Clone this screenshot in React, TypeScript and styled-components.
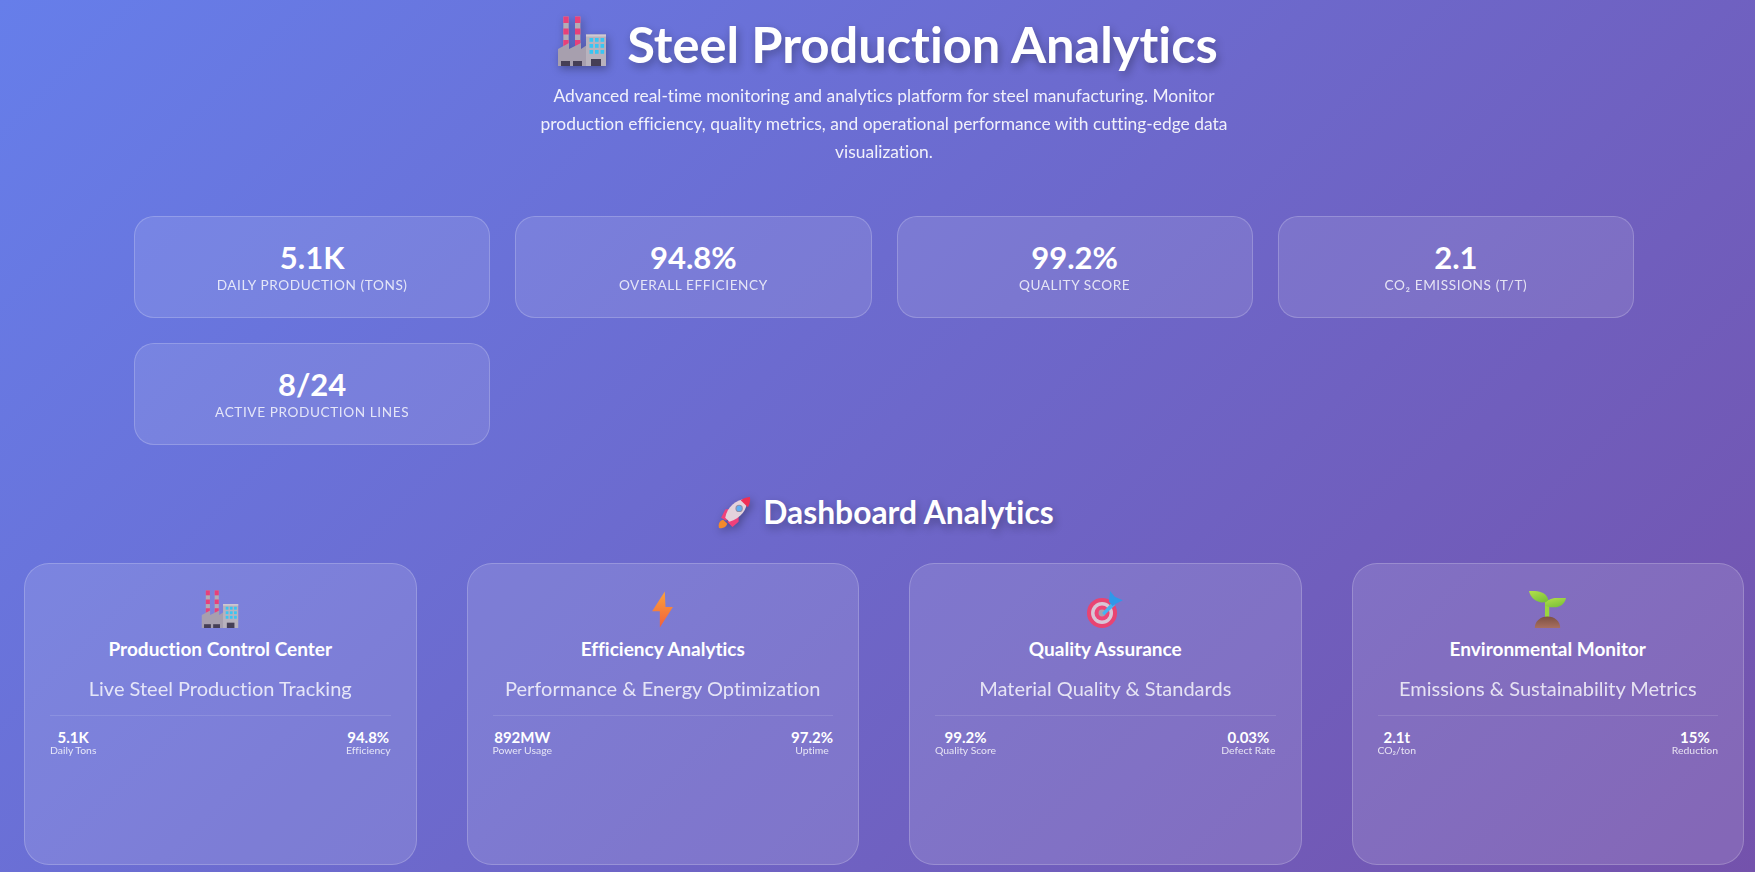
import React from 'react';
import styled, { createGlobalStyle } from 'styled-components';

const GlobalStyle = createGlobalStyle`
  * { box-sizing: border-box; }
  html, body {
    margin: 0;
    padding: 0;
    height: 872px;
    overflow: hidden;
  }
  body {
    font-family: 'Lato', 'Liberation Sans', sans-serif;
    font-variant-ligatures: none;
    color: #fff;
  }
`;

const Page = styled.div`
  width: 1755px;
  height: 872px;
  overflow: hidden;
  background: linear-gradient(135deg, #667eea 0%, #764ba2 116%);
  padding: 0 11px 0 24px;
`;

const Hero = styled.header`
  display: flex;
  flex-direction: column;
  align-items: center;
  padding-top: 11px;
`;

const HeroTitle = styled.h1`
  display: flex;
  align-items: center;
  gap: 20px;
  margin: 0;
  padding-left: 7px;
  height: 66px;
  font-size: 50.6px;
  font-weight: 700;
  line-height: 66px;
  text-shadow: 2px 4px 8px rgba(0, 0, 0, 0.3);

  & > svg {
    margin-bottom: 6px;
  }
`;

const HeroText = styled.p`
  width: 700px;
  margin: 5px 0 0;
  font-size: 17.4px;
  font-weight: 400;
  line-height: 28px;
  text-align: center;
  opacity: 0.9;
`;

const StatsGrid = styled.section`
  display: grid;
  grid-template-columns: repeat(4, 356.25px);
  gap: 25px;
  width: 1500px;
  margin: 50px 0 0 110px;
`;

const StatCard = styled.div`
  height: 102px;
  display: flex;
  flex-direction: column;
  align-items: center;
  padding-top: 24px;
  border: 1px solid rgba(255, 255, 255, 0.2);
  border-radius: 20px;
  background: rgba(255, 255, 255, 0.1);
`;

const StatValue = styled.div`
  font-size: 31px;
  font-weight: 700;
  line-height: 32px;
`;

const StatLabel = styled.div`
  margin-top: 4px;
  font-size: 13.6px;
  line-height: 17px;
  letter-spacing: 0.6px;
  text-transform: uppercase;
  opacity: 0.8;
`;

const SectionTitle = styled.h2`
  display: flex;
  align-items: center;
  justify-content: center;
  gap: 12px;
  height: 40px;
  margin: 47px 0 0;
  padding-left: 4px;
  font-size: 31.8px;
  font-weight: 700;
  line-height: 40px;
  text-shadow: 2px 4px 8px rgba(0, 0, 0, 0.3);
`;

const CardGrid = styled.section`
  display: grid;
  grid-template-columns: repeat(4, 392.5px);
  gap: 50px;
  margin-top: 31px;
`;

const DashCard = styled.article`
  height: 302px;
  padding: 27px 25px 25px;
  border: 1px solid rgba(255, 255, 255, 0.2);
  border-radius: 25px;
  background: rgba(255, 255, 255, 0.12);
`;

const CardIcon = styled.div`
  display: flex;
  justify-content: center;
  align-items: flex-end;
  height: 37px;
`;

const CardTitle = styled.h3`
  margin: 9px 0 0;
  font-size: 19px;
  font-weight: 700;
  line-height: 24px;
  text-align: center;
`;

const CardSubtitle = styled.p`
  margin: 15px 0 0;
  font-size: 20px;
  font-weight: 400;
  line-height: 24px;
  text-align: center;
  opacity: 0.8;
`;

const Metrics = styled.div`
  display: flex;
  justify-content: space-between;
  margin-top: 15px;
  padding-top: 13px;
  border-top: 1px solid rgba(255, 255, 255, 0.12);
`;

const Metric = styled.div`
  display: flex;
  flex-direction: column;
  align-items: center;
`;

const MetricValue = styled.div`
  font-size: 15px;
  font-weight: 700;
  line-height: 16px;
`;

const MetricLabel = styled.div`
  font-size: 10.4px;
  line-height: 10px;
  opacity: 0.8;
`;

const Drawn = styled.svg<{ $shadow?: boolean }>`
  display: block;
  flex: none;
  filter: ${(p) => (p.$shadow ? 'drop-shadow(2px 3px 4px rgba(0, 0, 0, 0.3))' : 'none')};
`;

type IconProps = { size: number; shadow?: boolean };

const FactoryIcon = ({ size, shadow }: IconProps) => (
  <Drawn $shadow={shadow} width={size} height={size} viewBox="0 0 48 50">
    {[5.3, 17].map((x) => (
      <g key={x}>
        <rect x={x} y="0.5" width="5.4" height="34" fill="#b3acb5" />
        <rect x={x} y="0.5" width="5.4" height="6.5" fill="#e8407a" />
        <rect x={x} y="12.5" width="5.4" height="6" fill="#e8407a" />
        <rect x={x} y="24" width="5.4" height="6" fill="#e8407a" />
      </g>
    ))}
    <path d="M0 50V33l11-6v6l12-6v6l6-4v21z" fill="#a79fae" />
    <rect x="28" y="18.5" width="20" height="31.5" fill="#b8b2bd" />
    <rect x="28" y="18.5" width="20" height="2" fill="#cfcad2" />
    {[32, 37.5, 43].map((x) =>
      [22, 28, 34].map((y) => (
        <rect key={`${x}-${y}`} x={x - 0.5} y={y} width="3.6" height="3.8" fill="#38c6f4" />
      )),
    )}
    <rect x="3" y="45" width="9" height="5" fill="#463f56" />
    <rect x="15" y="45" width="9" height="5" fill="#463f56" />
    <rect x="33" y="43" width="10" height="7" fill="#463f56" />
  </Drawn>
);

const RocketIcon = ({ size, shadow }: IconProps) => (
  <Drawn $shadow={shadow} width={size} height={size} viewBox="0 0 32 32">
    <path d="M1 31c-1-3 0-7 4-8l4 4c-1 3-4 5-8 4z" fill="#f58a2a" />
    <path d="M7 13l7-1-6 12-5-3z" fill="#f0407a" />
    <path d="M20 25l0-7-11 7 5 5z" fill="#f0407a" />
    <path d="M7 21C9 11 17 3 28 3c1 10-6 19-17 22z" fill="#e4d3dc" />
    <path d="M22 4c3-2 7-3 9-3 .5 3-.2 7-2 10z" fill="#ef2f55" />
    <circle cx="20.500" cy="12" r="3.600" fill="#8f8fa8" />
    <circle cx="20.500" cy="12" r="2.500" fill="#5fb0f5" />
  </Drawn>
);

const BoltIcon = ({ size }: IconProps) => (
  <Drawn width={size} height={size} viewBox="0 0 32 32">
    <defs>
      <linearGradient id="bolt" x1="0.5" y1="0" x2="0.5" y2="1">
        <stop offset="0" stopColor="#fba23a" />
        <stop offset="1" stopColor="#f2603c" />
      </linearGradient>
    </defs>
    <path d="M18 .5L7 17.600h6.700L13.700 31.500 25 13.800h-6.400z" fill="url(#bolt)" />
  </Drawn>
);

const TargetIcon = ({ size }: IconProps) => (
  <Drawn width={size} height={size} viewBox="0 0 32 32">
    <circle cx="13" cy="19" r="13" fill="#e84472" />
    <circle cx="13" cy="19" r="9.500" fill="#d9c6d6" />
    <circle cx="13" cy="19" r="6.500" fill="#ee4678" />
    <circle cx="13" cy="19" r="3" fill="#a7a0ae" />
    <path d="M13 19l9-9.500 2.500 2.500-9.500 9z" fill="#45b4f2" />
    <path d="M19 9L20 0l4 5 7 3-6 3-3 2z" fill="#2f98ea" />
  </Drawn>
);

const SeedlingIcon = ({ size }: IconProps) => (
  <Drawn width={size} height={size} viewBox="0 0 32 32">
    <defs>
      <linearGradient id="leaf" x1="0" y1="0" x2="0.6" y2="1">
        <stop offset="0" stopColor="#b4e04a" />
        <stop offset="1" stopColor="#7cc23a" />
      </linearGradient>
      <linearGradient id="soil" x1="0.5" y1="0" x2="0.5" y2="1">
        <stop offset="0" stopColor="#7d5042" />
        <stop offset="1" stopColor="#a86f60" />
      </linearGradient>
    </defs>
    <path d="M13.800 8h3.700v16h-3.700z" fill="#9ad63e" />
    <path d="M0 0C8-.5 15 1 16.700 7.500 17 10 9 11.500 4 7 2 5 .5 2.500 0 0z" fill="url(#leaf)" />
    <path d="M32 6c-1 5-5 8.500-11 8-3 0-6-.5-7-1.500C15 8 19 6 24 6z" fill="url(#leaf)" />
    <path d="M5 32c0-6 5-10 11-10s11 4 11 10z" fill="url(#soil)" />
  </Drawn>
);

const stats = [
  { value: '5.1K', label: 'Daily Production (Tons)' },
  { value: '94.8%', label: 'Overall Efficiency' },
  { value: '99.2%', label: 'Quality Score' },
  { value: '2.1', label: 'CO₂ Emissions (t/t)' },
  { value: '8/24', label: 'Active Production Lines' },
];

const cards = [
  {
    icon: <FactoryIcon size={38} />,
    title: 'Production Control Center',
    subtitle: 'Live Steel Production Tracking',
    metrics: [
      { value: '5.1K', label: 'Daily Tons' },
      { value: '94.8%', label: 'Efficiency' },
    ],
  },
  {
    icon: <BoltIcon size={37} />,
    title: 'Efficiency Analytics',
    subtitle: 'Performance & Energy Optimization',
    metrics: [
      { value: '892MW', label: 'Power Usage' },
      { value: '97.2%', label: 'Uptime' },
    ],
  },
  {
    icon: <TargetIcon size={37} />,
    title: 'Quality Assurance',
    subtitle: 'Material Quality & Standards',
    metrics: [
      { value: '99.2%', label: 'Quality Score' },
      { value: '0.03%', label: 'Defect Rate' },
    ],
  },
  {
    icon: <SeedlingIcon size={37} />,
    title: 'Environmental Monitor',
    subtitle: 'Emissions & Sustainability Metrics',
    metrics: [
      { value: '2.1t', label: 'CO₂/ton' },
      { value: '15%', label: 'Reduction' },
    ],
  },
];

const App = () => (
  <Page>
    <GlobalStyle />
    <Hero>
      <HeroTitle>
        <FactoryIcon size={50} shadow />
        Steel Production Analytics
      </HeroTitle>
      <HeroText>
        Advanced real-time monitoring and analytics platform for steel manufacturing. Monitor
        production efficiency, quality metrics, and operational performance with cutting-edge data
        visualization.
      </HeroText>
    </Hero>
    <StatsGrid>
      {stats.map((s) => (
        <StatCard key={s.label}>
          <StatValue>{s.value}</StatValue>
          <StatLabel>{s.label}</StatLabel>
        </StatCard>
      ))}
    </StatsGrid>
    <SectionTitle>
      <RocketIcon size={33} shadow />
      Dashboard Analytics
    </SectionTitle>
    <CardGrid>
      {cards.map((c) => (
        <DashCard key={c.title}>
          <CardIcon>{c.icon}</CardIcon>
          <CardTitle>{c.title}</CardTitle>
          <CardSubtitle>{c.subtitle}</CardSubtitle>
          <Metrics>
            {c.metrics.map((m) => (
              <Metric key={m.label}>
                <MetricValue>{m.value}</MetricValue>
                <MetricLabel>{m.label}</MetricLabel>
              </Metric>
            ))}
          </Metrics>
        </DashCard>
      ))}
    </CardGrid>
  </Page>
);

export default App;
